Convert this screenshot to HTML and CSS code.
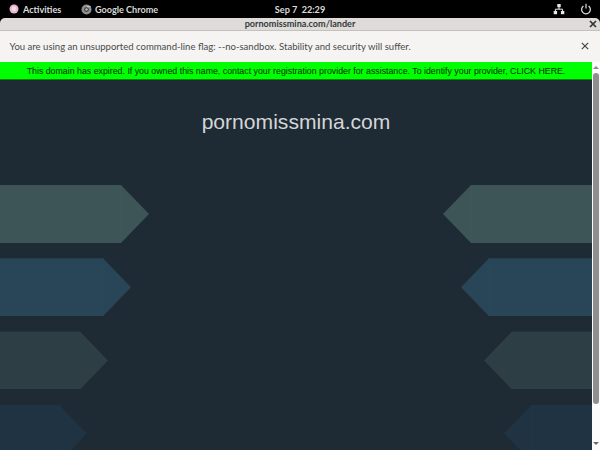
FILE: index.html
```html
<!DOCTYPE html>
<html lang="en">
<head>
<meta charset="utf-8">
<title>pornomissmina.com/lander</title>
<link rel="stylesheet" href="styles.css">
</head>
<body>
<header class="topbar">
  <div class="topbar-left">
    <span class="top-item activities">
      <svg class="ic" width="10" height="10" viewBox="0 0 10 10"><circle cx="5" cy="5" r="4.5" fill="#e8b6cf"/><circle cx="5" cy="5" r="2.4" fill="#f3dbe7"/></svg>
      Activities
    </span>
    <span class="top-item chrome">
      <svg class="ic" width="11" height="11" viewBox="0 0 11 11"><circle cx="5.5" cy="5.5" r="5" fill="#8f8f8f"/><circle cx="5.5" cy="5.5" r="2.3" fill="#2e2e2e"/><path d="M5.5 2.6h4.2" stroke="#c8c8c8" stroke-width="1.1"/><circle cx="5.5" cy="5.5" r="1.3" fill="#bdbdbd"/></svg>
      Google Chrome
    </span>
  </div>
  <div class="clock">Sep 7&nbsp;&nbsp;22:29</div>
  <div class="topbar-right">
    <svg width="12" height="12" viewBox="0 0 12 12"><g fill="#e8e8e8"><rect x="4.3" y="1" width="3.4" height="3.2"/><rect x="0.7" y="8" width="3.4" height="3.2"/><rect x="7.9" y="8" width="3.4" height="3.2"/></g><path d="M6 4v2.2M2.4 8V6.2h7.2V8" fill="none" stroke="#e8e8e8"/></svg>
    <svg width="12" height="12" viewBox="0 0 12 12"><path d="M3.4 2.9a4.4 4.4 0 1 0 5.2 0" fill="none" stroke="#e0e0e0" stroke-width="1.2"/><path d="M6 .8v4.6" stroke="#e0e0e0" stroke-width="1.2"/></svg>
  </div>
</header>
<div class="window">
  <div class="titlebar">
    <span class="title">pornomissmina.com/lander</span>
    <svg class="title-close" width="8" height="8" viewBox="0 0 8 8"><path d="M1 1l6 6M7 1l-6 6" stroke="#2e3436" stroke-width="1.7"/></svg>
  </div>
  <div class="infobar">
    <span>You are using an unsupported command-line flag: --no-sandbox. Stability and security will suffer.</span>
    <svg width="8" height="8" viewBox="0 0 8 8"><path d="M.8.8l6.4 6.4M7.2.8L.8 7.2" stroke="#454545" stroke-width="1.2"/></svg>
  </div>
  <div class="viewport">
    <main class="page">
      <div class="notice">This domain has expired. If you owned this name, contact your registration provider for assistance. To identify your provider, CLICK HERE.</div>
      <div class="stage">
        <h1 class="domain">pornomissmina.com</h1>
        <div class="arrows">
          <div class="col col-left">
            <div class="arrow to-right a1 w1"></div>
            <div class="arrow to-right a2 w2"></div>
            <div class="arrow to-right a3 w3"></div>
            <div class="arrow to-right a4 w4"></div>
          </div>
          <div class="col col-right">
            <div class="arrow to-left a1 w5"></div>
            <div class="arrow to-left a2 w6"></div>
            <div class="arrow to-left a3 w7"></div>
            <div class="arrow to-left a4 w8"></div>
          </div>
        </div>
      </div>
    </main>
    <div class="scrollbar">
      <svg class="sb-arrow" width="8" height="5" viewBox="0 0 8 5"><path d="M4 1l3 3H1z" fill="#8a8a8a"/></svg>
      <div class="thumb"></div>
      <svg class="sb-arrow" width="8" height="5" viewBox="0 0 8 5"><path d="M4 4L1 1h6z" fill="#6a6a6a"/></svg>
    </div>
  </div>
</div>
</body>
</html>
```
FILE: styles.css
```css
* { box-sizing: border-box; }
html, body { margin: 0; padding: 0; }
body {
  width: 600px;
  height: 450px;
  overflow: hidden;
  background: #000;
  font-family: Lato, "Noto Sans", sans-serif;
  display: flex;
  flex-direction: column;
}
.topbar {
  height: 18px;
  flex: none;
  background: #000;
  color: #dedede;
  font-size: 9.1px;
  font-weight: 700;
  display: grid;
  grid-template-columns: 1fr auto 1fr;
  align-items: center;
}
.topbar-left { display: flex; align-items: center; padding-left: 9px; }
.top-item { display: flex; align-items: center; }
.activities { gap: 4px; width: 72px; }
.chrome { gap: 3px; color: #d8d8d8; }
.clock { color: #dcdcdc; }
.topbar-right { display: flex; justify-content: flex-end; gap: 15px; padding-right: 8px; }
.window { flex: 1; display: flex; flex-direction: column; min-height: 0; }
.titlebar {
  height: 13px;
  flex: none;
  background: #dedbd8;
  border-radius: 5px 5px 0 0;
  border-bottom: 1px solid #c4c1bd;
  display: flex;
  align-items: center;
  justify-content: center;
  position: relative;
}
.title { font-size: 9.1px; font-weight: 700; color: #33393b; line-height: 12px; }
.title-close { position: absolute; right: 3px; top: 2px; }
.infobar {
  height: 31px;
  flex: none;
  background: #f5f4f2;
  color: #4a4a4a;
  font-size: 9.55px;
  display: flex;
  align-items: center;
  justify-content: space-between;
  padding: 0 11px 1px 9.5px;
}
.viewport { flex: 1; display: flex; min-height: 0; }
.page { width: 592px; flex: none; display: flex; flex-direction: column; background: #1e2a34; }
.notice {
  height: 18px;
  flex: none;
  background: #00ff00;
  color: #022802;
  font-family: "Liberation Sans", Arial, sans-serif;
  font-size: 8.8px;
  line-height: 18px;
  text-align: center;
  white-space: nowrap;
  border-bottom: 1px solid #0a8a0a;
}
.stage { flex: 1; min-height: 0; overflow: hidden; display: flex; flex-direction: column; }
.domain {
  margin: 28px 0 0;
  height: 27px;
  font-family: "Liberation Sans", Arial, sans-serif;
  font-weight: 400;
  font-size: 21.1px;
  line-height: 27px;
  text-align: center;
  color: #d4d6d8;
}
.arrows { margin-top: 50px; display: flex; justify-content: space-between; }
.col { display: flex; flex-direction: column; gap: 15.2px; }
.col-right { align-items: flex-end; }
.arrow { height: 58px; flex: none; }
.to-right {
  clip-path: polygon(0 0, calc(100% - 28px) 0, 100% 50%, calc(100% - 28px) 100%, 0 100%);
  background-image: linear-gradient(to left, transparent 28px, rgba(255, 255, 255, .01) 28px, rgba(255, 255, 255, .01) 29px, transparent 29px);
}
.to-left {
  clip-path: polygon(28px 0, 100% 0, 100% 100%, 28px 100%, 0 50%);
  background-image: linear-gradient(to right, transparent 28px, rgba(255, 255, 255, .01) 28px, rgba(255, 255, 255, .01) 29px, transparent 29px);
}
.a1 { background-color: #3e5558; }
.a2 { background-color: #284657; }
.a3 { background-color: #2d3f45; background-image: none; }
.a4 { background-color: #1f3342; }
.w1 { width: 149px; }
.w2 { width: 131px; }
.w3 { width: 108px; }
.w4 { width: 87px; }
.w5 { width: 149px; }
.w6 { width: 131px; }
.w7 { width: 108px; }
.w8 { width: 88px; }
.scrollbar {
  width: 8px;
  flex: none;
  background: #fbfbfb;
  display: flex;
  flex-direction: column;
  align-items: center;
  padding: 3px 0 4px;
}
.thumb {
  width: 6px;
  flex: 1;
  margin: 3px 0 37px;
  background: #8f8f8f;
  border-radius: 3px;
}
.sb-arrow { flex: none; }
```
